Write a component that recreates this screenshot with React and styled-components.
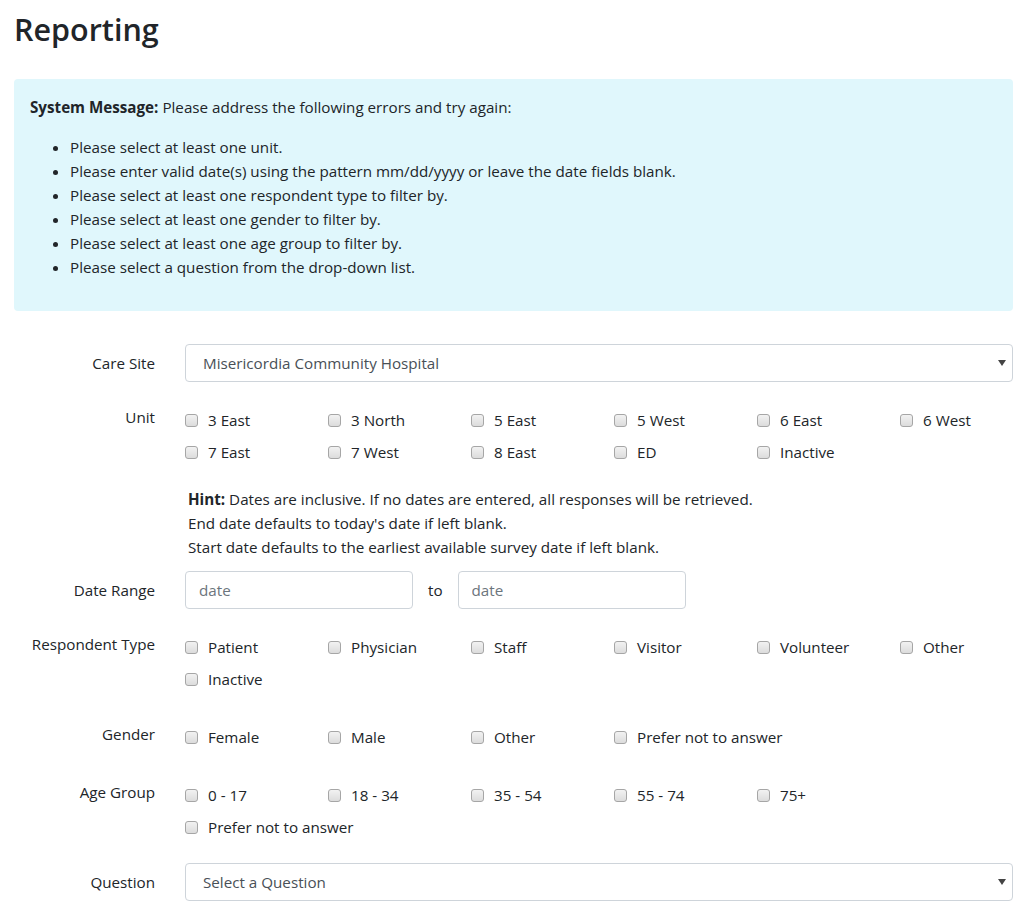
import React from "react"
import styled, { createGlobalStyle } from "styled-components"

const GlobalStyle = createGlobalStyle`
  body {
    margin: 0;
    background: #fff;
    color: #212529;
    font-family: "Open Sans", "Liberation Sans", sans-serif;
    font-size: 15.2px;
    line-height: 24px;
  }
  * { box-sizing: border-box; }
`;

const Page = styled("div")`
  padding: 9px 13px 20px 14px;
  width: 1026px;
`;

const Title = styled("h2")`
  margin: 0 0 30px;
  font-size: 30.5px;
  font-weight: 600;
  line-height: 40px;
  color: #212529;
`;

const Alert = styled("div")`
  background: #e0f7fc;
  border-radius: 4px;
  padding: 16px 16px;
  margin-bottom: 33px;
  p { margin: 0 0 16px; }
  ul { margin: 0 0 16px; padding-left: 40px; }
  li { line-height: 24px; }
`;

const Form = styled("form")`
  display: flex;
  flex-direction: column;
`;

const Row = styled("div")`
  display: grid;
  grid-template-columns: 141px 1fr;
  column-gap: 30px;
  margin-bottom: ${p => (p.$tight ? "12px" : "16px")};
`;

const Label = styled("label")`
  text-align: right;
  padding-top: 7px;
  line-height: 24px;
`;

const SelectWrap = styled("div")`
  position: relative;
`;

const Select = styled("select")`
  appearance: none;
  -webkit-appearance: none;
  width: 100%;
  height: 38px;
  padding: 0 28px 0 17px;
  border: 1px solid #ced4da;
  border-radius: 4px;
  background: #fff;
  color: #495057;
  font: inherit;
`;

const Caret = styled("svg")`
  position: absolute;
  right: 7px;
  top: 16px;
  pointer-events: none;
`;

const CheckGrid = styled("div")`
  display: grid;
  grid-template-columns: repeat(6, minmax(0, 1fr));
  margin-right: -30px;
  row-gap: 8px;
  padding: 10px 0 8px;
`;

const Check = styled("label")`
  display: flex;
  align-items: center;
  gap: 10px;
  line-height: 24px;
  white-space: nowrap;
  grid-column: ${p => (p.$newLine ? "1" : "auto")};
`;

const Box = styled("input")`
  appearance: none;
  -webkit-appearance: none;
  width: 13px;
  height: 13px;
  margin: 0;
  flex: none;
  border: 1px solid #a6a6a6;
  border-radius: 3px;
  background: linear-gradient(#f2f2f2, #dcdcdc);
`;

const Hint = styled("div")`
  grid-column: 2;
  padding-left: 3px;
  line-height: 24px;
  margin-top: -1px;
  b { font-weight: 700; }
`;

const DateLine = styled("div")`
  display: flex;
  align-items: center;
  gap: 15px;
`;

const Input = styled("input")`
  width: 228px;
  height: 38px;
  padding: 0 13px;
  border: 1px solid #ced4da;
  border-radius: 4px;
  font: inherit;
  color: #495057;
  &::placeholder { color: #6c757d; }
`;

const units = ["3 East", "3 North", "5 East", "5 West", "6 East", "6 West", "7 East", "7 West", "8 East", "ED", "Inactive"];
const respondents = ["Patient", "Physician", "Staff", "Visitor", "Volunteer", "Other", "Inactive"];
const genders = ["Female", "Male", "Other", "Prefer not to answer"];
const ages = ["0 - 17", "18 - 34", "35 - 54", "55 - 74", "75+", "Prefer not to answer"];

const errors = [
  "Please select at least one unit.",
  "Please enter valid date(s) using the pattern mm/dd/yyyy or leave the date fields blank.",
  "Please select at least one respondent type to filter by.",
  "Please select at least one gender to filter by.",
  "Please select at least one age group to filter by.",
  "Please select a question from the drop-down list.",
];

const Checks = ({ items, breakAt }) => (
  <CheckGrid>
    {items.map((i, n) => (
      <Check key={i} $newLine={n === breakAt}>
        <Box type="checkbox" />
        {i}
      </Check>
    ))}
  </CheckGrid>
);

const Dropdown = ({ value }) => (
  <SelectWrap>
    <Select defaultValue={value}>
      <option>{value}</option>
    </Select>
    <Caret width="8" height="6" viewBox="0 0 8 6">
      <path d="M0 0h8L4 6z" fill="#444" />
    </Caret>
  </SelectWrap>
);

export default function App() {
  return (
    <Page>
      <GlobalStyle />
      <Title>Reporting</Title>
      <Alert>
        <p><b>System Message:</b> Please address the following errors and try again:</p>
        <ul>
          {errors.map(e => <li key={e}>{e}</li>)}
        </ul>
      </Alert>
      <Form>
        <Row>
          <Label>Care Site</Label>
          <Dropdown value="Misericordia Community Hospital" />
        </Row>
        <Row>
          <Label>Unit</Label>
          <Checks items={units} />
        </Row>
        <Row $tight>
          <Hint>
            <b>Hint:</b> Dates are inclusive. If no dates are entered, all responses will be retrieved.<br />
            End date defaults to today's date if left blank.<br />
            Start date defaults to the earliest available survey date if left blank.
          </Hint>
        </Row>
        <Row>
          <Label>Date Range</Label>
          <DateLine>
            <Input placeholder="date" />
            to
            <Input placeholder="date" />
          </DateLine>
        </Row>
        <Row>
          <Label>Respondent Type</Label>
          <Checks items={respondents} />
        </Row>
        <Row>
          <Label>Gender</Label>
          <Checks items={genders} />
        </Row>
        <Row>
          <Label>Age Group</Label>
          <Checks items={ages} breakAt={5} />
        </Row>
        <Row>
          <Label>Question</Label>
          <Dropdown value="Select a Question" />
        </Row>
      </Form>
    </Page>
  );
}
